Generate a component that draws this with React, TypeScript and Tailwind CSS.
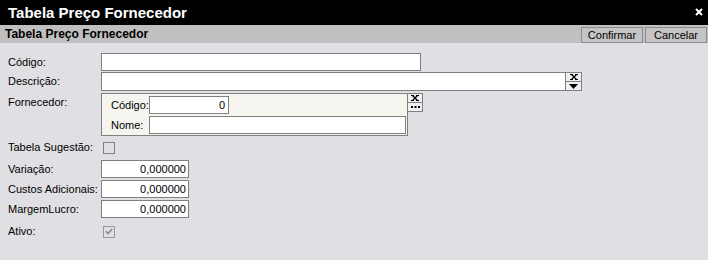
import React from "react";

const font = { fontFamily: '"Liberation Sans", Arial, sans-serif' };

function XGlyph() {
  return (
    <svg width="8" height="6" viewBox="0 0 8 6" className="block">
      <path d="M1.5 0.5 L6.5 5.5 M6.5 0.5 L1.5 5.5" stroke="#000" strokeWidth="1.3" fill="none" />
      <path d="M0 0.5 H3 M5 0.5 H8 M0 5.5 H3 M5 5.5 H8" stroke="#000" strokeWidth="1" fill="none" />
    </svg>
  );
}

function DownGlyph() {
  return (
    <svg width="9" height="5" viewBox="0 0 9 5" className="block">
      <polygon points="0,0 9,0 4.5,5" fill="#000" />
    </svg>
  );
}

function DotsGlyph() {
  return (
    <svg width="9" height="2" viewBox="0 0 9 2" className="block">
      <rect x="0" y="0" width="2" height="2" fill="#000" />
      <rect x="3.5" y="0" width="2" height="2" fill="#000" />
      <rect x="7" y="0" width="2" height="2" fill="#000" />
    </svg>
  );
}

function Label({ children }: { children: React.ReactNode }) {
  return <div className="w-[93px] shrink-0 text-[11px] leading-[13px] text-black">{children}</div>;
}

function NumInput({ value }: { value: string }) {
  return (
    <div className="w-[88px] h-[18px] border border-[#808080] bg-white flex items-center justify-end pr-[2px] text-[11px] leading-[13px] text-black">
      {value}
    </div>
  );
}

function Check({ checked }: { checked?: boolean }) {
  return (
    <div className={`ml-[2px] w-[12px] h-[12px] border ${checked ? "border-[#9a9a9a]" : "border-[#808080]"} flex items-center justify-center`}>
      {checked && (
        <svg width="8" height="7" viewBox="0 0 8 7" className="block">
          <path d="M0.8 3.2 L3 5.5 L7.2 1" stroke="#8a8a8a" strokeWidth="1.6" fill="none" />
        </svg>
      )}
    </div>
  );
}

export default function App() {
  return (
    <div className="w-[708px] h-[260px] flex flex-col bg-[#e0dfe3] overflow-hidden" style={font}>
      {/* Title bar */}
      <div className="h-[25px] bg-black flex items-center justify-between pl-[8px] pr-[5px]">
        <span className="text-white font-bold text-[15px] leading-[18px]">Tabela Preço Fornecedor</span>
        <svg width="8" height="8" viewBox="0 0 8 8" className="block mt-[-1px]">
          <path d="M1 1 L7 7 M7 1 L1 7" stroke="#fff" strokeWidth="2" fill="none" />
        </svg>
      </div>
      {/* Sub header */}
      <div className="h-[18px] bg-[#c0c0c0] flex items-center justify-between pl-[5px] pr-[1px]">
        <span className="font-bold text-[12px] leading-[14px] text-black">Tabela Preço Fornecedor</span>
        <div className="flex gap-[2px] mt-[1px]">
          <button className="w-[62px] h-[16px] border border-[#8c8c8c] bg-[#c4c4c4] text-[11px] leading-[12px] text-black flex items-center justify-center">
            Confirmar
          </button>
          <button className="w-[62px] h-[16px] border border-[#8c8c8c] bg-[#c4c4c4] text-[11px] leading-[12px] text-black flex items-center justify-center">
            Cancelar
          </button>
        </div>
      </div>
      {/* Body */}
      <div className="flex flex-col pl-[8px] pt-[10px]">
        <div className="flex items-center h-[18px]">
          <Label>Código:</Label>
          <div className="w-[320px] h-[18px] border border-[#808080] bg-white" />
        </div>
        <div className="flex items-center h-[19px] mt-[1px]">
          <Label>Descrição:</Label>
          <div className="w-[465px] h-[19px] border border-[#808080] bg-white" />
          <div className="flex flex-col w-[16px] h-[19px] border border-[#808080] border-l-0 bg-[#f0f0f0]">
            <div className="h-[9px] border-b border-[#808080] flex items-center justify-center">
              <XGlyph />
            </div>
            <div className="flex-1 flex items-center justify-center">
              <DownGlyph />
            </div>
          </div>
        </div>
        <div className="flex items-start h-[43px] mt-[2px]">
          <div className="pt-[3px]">
            <Label>Fornecedor:</Label>
          </div>
          <div className="w-[307px] h-[43px] border border-[#808080] bg-[#f5f4ef] flex flex-col pt-[2px] pl-[9px] pr-[1px] gap-[2px]">
            <div className="flex items-center h-[18px]">
              <div className="w-[38px] text-[11px] leading-[13px] text-black">Código:</div>
              <div className="w-[80px] h-[18px] border border-[#808080] bg-white flex items-center justify-end pr-[3px] text-[11px] leading-[13px] text-black">
                0
              </div>
            </div>
            <div className="flex items-center h-[18px]">
              <div className="w-[38px] text-[11px] leading-[13px] text-black">Nome:</div>
              <div className="flex-1 h-[18px] border border-[#808080] bg-white" />
            </div>
          </div>
          <div className="flex flex-col w-[15px] h-[19px] border border-[#808080] border-l-0 bg-[#f0f0f0]">
            <div className="h-[9px] border-b border-[#808080] flex items-center justify-center">
              <XGlyph />
            </div>
            <div className="flex-1 flex items-center justify-center">
              <DotsGlyph />
            </div>
          </div>
        </div>
        <div className="flex items-center h-[21px] mt-[1px]">
          <Label>Tabela Sugestão:</Label>
          <Check />
        </div>
        <div className="flex items-center h-[18px] mt-[2px]">
          <Label>Variação:</Label>
          <NumInput value="0,000000" />
        </div>
        <div className="flex items-center h-[18px] mt-[2px]">
          <Label>Custos Adicionais:</Label>
          <NumInput value="0,000000" />
        </div>
        <div className="flex items-center h-[18px] mt-[2px]">
          <Label>MargemLucro:</Label>
          <NumInput value="0,000000" />
        </div>
        <div className="flex items-center h-[21px] mt-[3px]">
          <Label>Ativo:</Label>
          <Check checked />
        </div>
      </div>
    </div>
  );
}
